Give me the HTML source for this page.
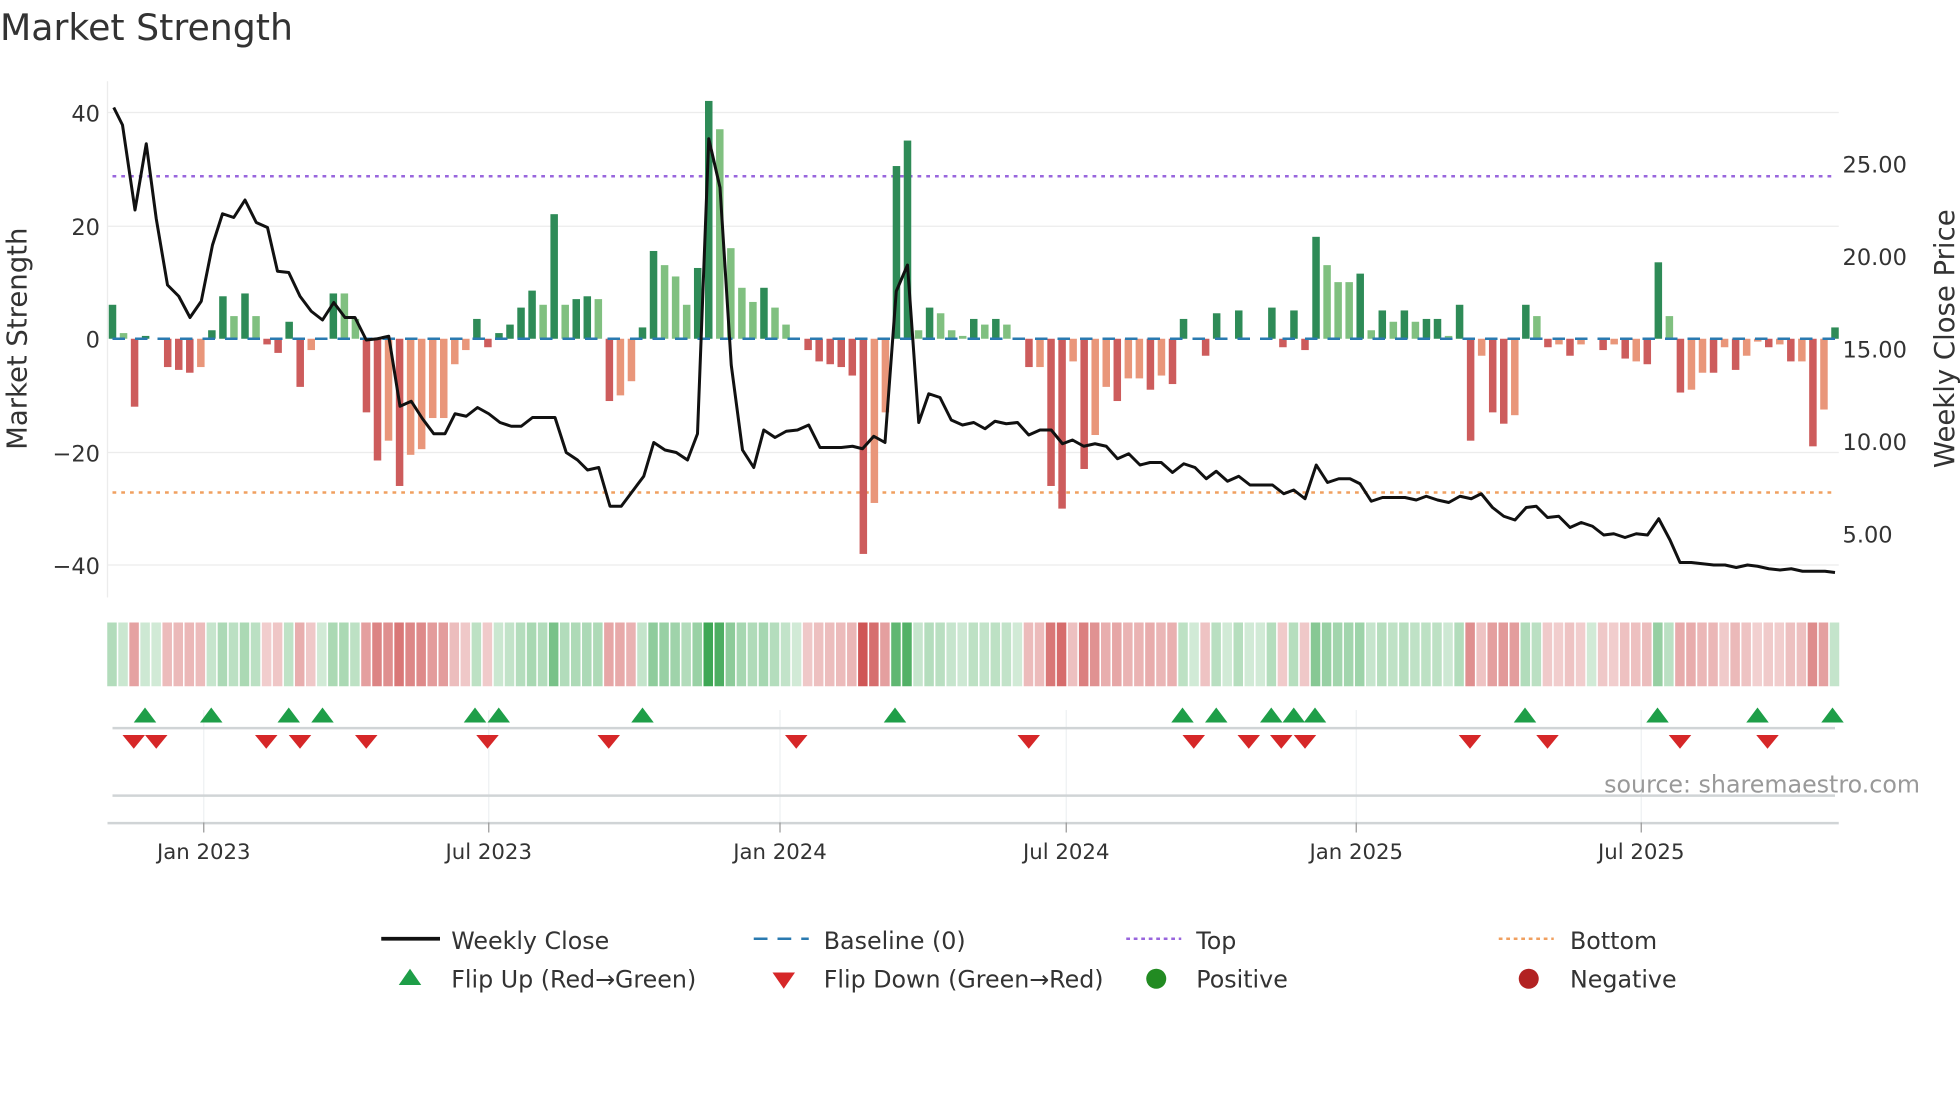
<!DOCTYPE html>
<html><head><meta charset="utf-8"><style>
html,body{margin:0;padding:0;background:#fff;width:1960px;height:1102px;overflow:hidden}
svg{display:block}
text{font-family:"DejaVu Sans","Liberation Sans",sans-serif;fill:#333}
</style></head><body>
<svg id="s" width="1960" height="1102" viewBox="0 0 1568 881.6" xmlns="http://www.w3.org/2000/svg">
<text x="0" y="32" font-size="29" fill="#333">Market Strength</text>
<g stroke="#ececec" stroke-width="1">
<line x1="86" x2="1471" y1="90" y2="90"/><line x1="86" x2="1471" y1="181" y2="181"/>
<line x1="86" x2="1471" y1="362" y2="362"/><line x1="86" x2="1471" y1="452" y2="452"/>
<line x1="86" x2="86" y1="65" y2="478"/>
</g>
<g font-size="18" text-anchor="end">
<text x="80" y="97">40</text><text x="80" y="188">20</text><text x="80" y="278">0</text>
<text x="80" y="369">−20</text><text x="80" y="459">−40</text>
</g>
<g font-size="18">
<text x="1474" y="138">25.00</text><text x="1474" y="212">20.00</text><text x="1474" y="286">15.00</text>
<text x="1474" y="360">10.00</text><text x="1474" y="434">5.00</text>
</g>
<text transform="translate(21,271) rotate(-90)" font-size="22" text-anchor="middle">Market Strength</text>
<text transform="translate(1563,271) rotate(-90)" font-size="22" text-anchor="middle">Weekly Close Price</text>
<line x1="90" x2="1468" y1="141" y2="141" stroke="#9966dd" stroke-width="2" stroke-dasharray="3,4"/>
<line x1="90" x2="1468" y1="394" y2="394" stroke="#f0a060" stroke-width="2" stroke-dasharray="3,4"/>
<g id="bars"></g>
<line x1="90" x2="1468" y1="271" y2="271" stroke="#2a7ab0" stroke-width="2" stroke-dasharray="10,8"/>
<polyline id="pl" fill="none" stroke="#111" stroke-width="2.4" stroke-linejoin="round"/>
<g id="heat"></g>
<g stroke="#eef0f2" stroke-width="1">
<line x1="163" x2="163" y1="568" y2="658"/><line x1="391" x2="391" y1="568" y2="658"/>
<line x1="624" x2="624" y1="568" y2="658"/><line x1="853" x2="853" y1="568" y2="658"/>
<line x1="1085" x2="1085" y1="568" y2="658"/><line x1="1313" x2="1313" y1="568" y2="658"/>
</g>
<line x1="90" x2="1468" y1="582.5" y2="582.5" stroke="#d0d4d6" stroke-width="2"/>
<line x1="90" x2="1468" y1="636.5" y2="636.5" stroke="#d0d4d6" stroke-width="2"/>
<line x1="86" x2="1471" y1="658.5" y2="658.5" stroke="#d0d4d6" stroke-width="2"/>
<g id="tri"></g>
<g stroke="#999" stroke-width="1">
<line x1="163" x2="163" y1="658" y2="666"/><line x1="391" x2="391" y1="658" y2="666"/>
<line x1="624" x2="624" y1="658" y2="666"/><line x1="853" x2="853" y1="658" y2="666"/>
<line x1="1085" x2="1085" y1="658" y2="666"/><line x1="1313" x2="1313" y1="658" y2="666"/>
</g>
<g font-size="17" text-anchor="middle">
<text x="163" y="687">Jan 2023</text><text x="391" y="687">Jul 2023</text><text x="624" y="687">Jan 2024</text>
<text x="853" y="687">Jul 2024</text><text x="1085" y="687">Jan 2025</text><text x="1313" y="687">Jul 2025</text>
</g>
<text x="1536" y="634" font-size="19" text-anchor="end" style="fill:#999">source: sharemaestro.com</text>
<g font-size="19">
<line x1="305" x2="352" y1="751" y2="751" stroke="#111" stroke-width="3"/>
<text x="361" y="759">Weekly Close</text>
<line x1="603" x2="647" y1="751" y2="751" stroke="#2a7ab0" stroke-width="2" stroke-dasharray="11,8"/>
<text x="659" y="759">Baseline (0)</text>
<line x1="901" x2="945" y1="751" y2="751" stroke="#9966dd" stroke-width="2" stroke-dasharray="3,3"/>
<text x="957" y="759">Top</text>
<line x1="1199" x2="1243" y1="751" y2="751" stroke="#f0a060" stroke-width="2" stroke-dasharray="3,3"/>
<text x="1256" y="759">Bottom</text>
<polygon points="319,788 337,788 328,775" fill="#1e9e48"/>
<text x="361" y="790">Flip Up (Red→Green)</text>
<polygon points="618,778 636,778 627,791" fill="#d62728"/>
<text x="659" y="790">Flip Down (Green→Red)</text>
<circle cx="925" cy="783" r="8" fill="#228b22"/>
<text x="957" y="790">Positive</text>
<circle cx="1223" cy="783" r="8" fill="#b22222"/>
<text x="1256" y="790">Negative</text>
</g>
</svg>
<script>
var NS="http://www.w3.org/2000/svg";
function el(p,t,a){var e=document.createElementNS(NS,t);for(var k in a)e.setAttribute(k,a[k]);p.appendChild(e);return e;}
var d="6D 1L -12R 0.5D 0D -5R -5.5R -6R -5S 1.5D 7.5D 4L 8D 4L -1R -2.5R 3D -8.5R -2S 0D 8D 8L 3.5L -13R -21.5R -18S -26R -20.5S -19.5S -14S -14S -4.5S -2S 3.5D -1.5R 1D 2.5D 5.5D 8.5D 6L 22D 6L 7D 7.5D 7L -11R -10S -7.5S 2D 15.5D 13L 11L 6L 12.5D 42D 37L 16L 9L 6.5L 9D 5.5L 2.5L 0D -2R -4R -4.5R -5R -6.5R -38R -29S -13S 30.5D 35D 1.5L 5.5D 4.5L 1.5L 0.5L 3.5D 2.5L 3.5D 2.5L 0D -5R -5S -26R -30R -4S -23R -17S -8.5S -11R -7S -7S -9R -6.5S -8R 3.5D 0D -3R 4.5D 0D 5D 0D 0D 5.5D -1.5R 5D -2R 18D 13L 10L 10L 11.5D 1.5L 5D 3L 5D 3L 3.5D 3.5D 0.5L 6D -18R -3S -13R -15R -13.5S 6D 4L -1.5R -1S -3R -1S 0D -2R -1S -3.5R -4S -4.5R 13.5D 4L -9.5R -9S -6S -6R -1.5S -5.5R -3S -0.5S -1.5R -1S -4R -4S -19R -12.5S 2D".split(" ");
var col={D:"#2e8b57",L:"#80c080",R:"#cd5c5c",S:"#e9967a"};
var bars=document.getElementById("bars"),heat=document.getElementById("heat");
var n=d.length,step=(1468-90)/(n-1);
for(var i=0;i<n;i++){
 var v=parseFloat(d[i]),t=d[i].slice(-1),x=90+i*step;
 var h=Math.abs(v)*4.53;
 if(h>0.3) el(bars,"rect",{x:x-3,y:v>0?271-h:271,width:6,height:h,fill:col[t]});
 var a=0.22+0.7*Math.pow(Math.min(Math.abs(v)/42,1),0.8);
 var c=(v>0||(v==0&&t!="R"&&t!="S"))?"rgba(46,160,70,"+a+")":"rgba(200,60,60,"+a+")";
 el(heat,"rect",{x:x-4.2,y:498,width:7.6,height:51,fill:c});
}
var p="91,86 98,100 108,168 117,115 125,175 134,228 143,237 152,254 161,241 170,196 178,171 187,174 196,160 205,178 214,182 222,217 231,218 240,237 249,249 258,256 267,242 276,254 284,254 293,272 302,271 311,269 320,325 329,321 338,335 347,347 356,347 364,331 373,333 382,326 391,331 400,338 409,341 417,341 426,334 435,334 444,334 453,362 462,368 470,376 479,374 488,405 497,405 506,393 515,381 523,354 532,360 541,362 550,368 558,347 567,111 576,150 585,292 594,360 603,374 611,344 620,350 629,345 638,344 647,340 656,358 664,358 673,358 682,357 690,359 699,349 708,354 717,233 726,212 735,338 743,315 752,318 761,336 770,340 779,338 788,343 796,337 805,339 814,338 823,348 832,344 841,344 850,355 858,352 867,357 876,355 885,357 894,367 903,363 912,372 920,370 929,370 938,378 947,371 956,374 965,383 973,377 982,385 991,381 1000,388 1009,388 1018,388 1027,395 1035,392 1044,399 1053,372 1062,386 1071,383 1080,383 1088,387 1097,401 1106,398 1115,398 1124,398 1133,400 1141,397 1150,400 1159,402 1168,397 1177,399 1185,395 1194,406 1203,413 1212,416 1221,406 1229,405 1238,414 1247,413 1256,422 1265,418 1274,421 1283,428 1291,427 1300,430 1309,427 1318,428 1327,415 1336,432 1344,450 1353,450 1362,451 1371,452 1380,452 1389,454 1398,452 1406,453 1415,455 1424,456 1433,455 1442,457 1451,457 1460,457 1468,458";
document.getElementById("pl").setAttribute("points",p);
var tri=document.getElementById("tri");
[116,169,231,258,380,399,514,716,946,973,1017,1035,1052,1220,1326,1406,1466].forEach(function(x){
 el(tri,"polygon",{points:(x-9)+",578 "+(x+9)+",578 "+x+",566",fill:"#1e9e48"});});
[107,125,213,240,293,390,487,637,823,955,999,1025,1044,1176,1238,1344,1414].forEach(function(x){
 el(tri,"polygon",{points:(x-9)+",588 "+(x+9)+",588 "+x+",599",fill:"#d62728"});});
</script>
</body></html>
